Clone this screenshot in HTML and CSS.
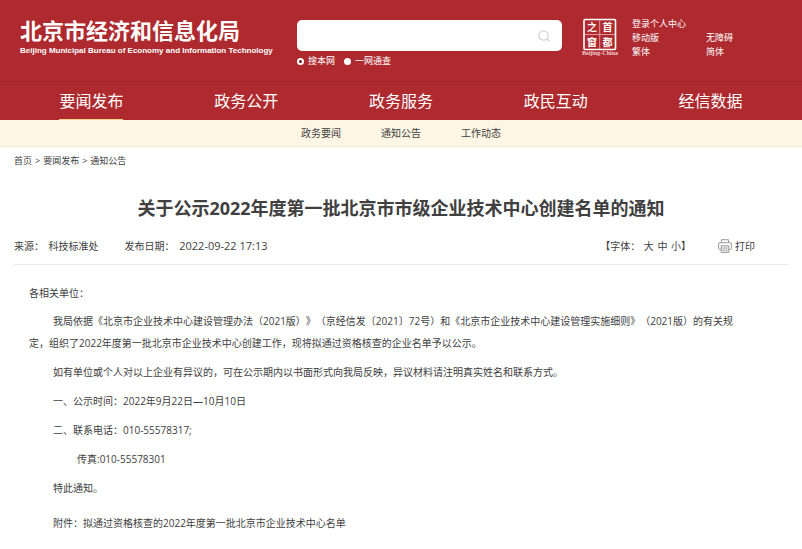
FILE: index.html
```html
<!DOCTYPE html>
<html lang="zh-CN">
<head>
  <meta charset="UTF-8">
  <meta name="viewport" content="width=device-width, initial-scale=1">
  <title>关于公示2022年度第一批北京市市级企业技术中心创建名单的通知</title>
  <link rel="stylesheet" href="styles.css">
</head>
<body>
  <header class="header">
    <div class="brand">
      <div class="brand-cn">北京市经济和信息化局</div>
      <div class="brand-en">Beijing Municipal Bureau of Economy and Information Technology</div>
    </div>

    <form class="search">
      <div class="search-box">
        <input type="text" class="search-input" aria-label="搜索">
        <button type="button" class="search-btn" aria-label="搜索">
          <svg width="12" height="12" viewBox="0 0 12 12" fill="none" stroke="#d3d3d3" stroke-width="1.3">
            <circle cx="5.5" cy="5.5" r="4.7"/>
            <path d="M8.8 8.8L11.4 11.2"/>
          </svg>
        </button>
      </div>
      <div class="search-range">
        <label><input type="radio" name="range" checked>搜本网</label>
        <label><input type="radio" name="range">一网通查</label>
      </div>
    </form>

    <a href="#" class="emblem" aria-label="首都之窗">
      <svg width="36" height="38" viewBox="0 0 36 38">
        <rect x="2" y="1.5" width="31.5" height="30" rx="1" fill="none" stroke="#fff" stroke-width="1.6"/>
        <path d="M17.7 2V31M3 16.5H33" stroke="#f0c9cb" stroke-width="0.7"/>
        <g class="emblem-seal">
          <text x="10" y="13">之</text>
          <text x="25.5" y="13">首</text>
          <text x="10" y="28">窗</text>
          <text x="25.5" y="28">都</text>
        </g>
        <text class="emblem-en" x="18" y="37">Beijing-China</text>
      </svg>
    </a>

    <div class="links">
      <a href="#" class="wide">登录个人中心</a>
      <a href="#">移动版</a>
      <a href="#">无障碍</a>
      <a href="#">繁体</a>
      <a href="#">简体</a>
    </div>
  </header>

  <nav class="nav">
    <div class="nav-item"><a href="#" class="active">要闻发布</a></div>
    <div class="nav-item"><a href="#">政务公开</a></div>
    <div class="nav-item"><a href="#">政务服务</a></div>
    <div class="nav-item"><a href="#">政民互动</a></div>
    <div class="nav-item"><a href="#">经信数据</a></div>
  </nav>

  <nav class="subnav">
    <a href="#">政务要闻</a>
    <a href="#">通知公告</a>
    <a href="#">工作动态</a>
  </nav>

  <main class="main">
    <div class="crumbs"><a href="#">首页</a> &gt; <a href="#">要闻发布</a> &gt; <a href="#">通知公告</a></div>

    <h1>关于公示2022年度第一批北京市市级企业技术中心创建名单的通知</h1>

    <div class="info">
      <div class="source">来源： <span>科技标准处</span></div>
      <div class="date">发布日期： <span class="time">2022-09-22 17:13</span></div>
      <div class="fontsize">【字体： <button type="button">大</button> <button type="button">中</button> <button type="button">小</button>】</div>
      <button type="button" class="print">
        <svg width="14" height="14" viewBox="0 0 14 14" fill="none" stroke="#999">
          <path d="M3.5 3.5V0.7H10.5V3.5"/>
          <path d="M3 10.5H1.8Q0.6 10.5 0.6 9.3V5Q0.6 3.7 1.8 3.7H12.2Q13.4 3.7 13.4 5V9.3Q13.4 10.5 12.2 10.5H11"/>
          <path d="M3.2 6.8H10.8V13.4H3.2Z" fill="#eee"/>
          <path d="M4.6 9H9.4M4.6 11.2H9.4" stroke-width="0.8"/>
        </svg>
        打印
      </button>
    </div>

    <article class="content">
      <p class="first">各相关单位：</p>
      <p>我局依据《北京市企业技术中心建设管理办法（2021版）》（京经信发〔2021〕72号）和《北京市企业技术中心建设管理实施细则》（2021版）的有关规定，组织了2022年度第一批北京市企业技术中心创建工作，现将拟通过资格核查的企业名单予以公示。</p>
      <p>如有单位或个人对以上企业有异议的，可在公示期内以书面形式向我局反映，异议材料请注明真实姓名和联系方式。</p>
      <p>一、公示时间：2022年9月22日—10月10日</p>
      <p>二、联系电话：010-55578317;</p>
      <p class="fax">传真:010-55578301</p>
      <p>特此通知。</p>
      <p class="attach">附件：<a href="#">拟通过资格核查的2022年度第一批北京市企业技术中心名单</a></p>
    </article>
  </main>
</body>
</html>
```
FILE: styles.css
```css
* {
  box-sizing: border-box;
}

body {
  margin: 0;
  font-family: "Open Sans", "Noto Sans CJK SC", sans-serif;
  font-size: 10px;
  line-height: 14px;
  color: #404040;
  background: #fff;
  text-spacing-trim: space-all;
}

a {
  color: inherit;
  text-decoration: none;
}

button {
  padding: 0;
  border: 0;
  background: none;
  font: inherit;
  color: inherit;
  cursor: pointer;
}

/* header */
.header {
  display: flex;
  align-items: flex-start;
  padding: 16px 14px 12px 20px;
  background: #ae2a2f;
  color: #fff;
}

.brand {
  width: 277px;
  white-space: nowrap;
}

.brand-cn {
  font-size: 22px;
  line-height: 28px;
  font-weight: 700;
}

.brand-en {
  font-family: "Liberation Sans", Arial, sans-serif;
  font-size: 8px;
  font-weight: 700;
}

.search {
  flex: 1;
  padding-top: 4px;
}

.search-box {
  display: flex;
  align-items: center;
  height: 31px;
  padding-right: 12px;
  border-radius: 5px;
  background: #fff;
}

.search-input {
  flex: 1;
  min-width: 0;
  height: 28px;
  margin-left: 8px;
  border: 0;
  outline: 0;
  background: none;
}

.search-btn {
  display: flex;
}

.search-range {
  display: flex;
  gap: 9px;
  padding: 3px 0 1px;
  font-size: 9px;
}

.search-range label {
  display: flex;
  align-items: center;
  gap: 4px;
}

.search-range input {
  appearance: none;
  width: 7px;
  height: 7px;
  margin: 0;
  border: 2px solid #fff;
  border-radius: 50%;
  background: #fff;
}

.search-range input:checked {
  background: #6d1518;
}

.emblem {
  display: flex;
  margin: 2px 14px 0 20px;
}

.emblem-seal {
  fill: #fff;
  font-family: "Noto Sans CJK SC", sans-serif;
  font-size: 10px;
  font-weight: 700;
  text-anchor: middle;
}

.emblem-en {
  fill: #f3d3d4;
  font-family: "Liberation Serif", serif;
  font-size: 6px;
  font-weight: 700;
  text-anchor: middle;
}

.links {
  display: grid;
  grid-template-columns: 74px 82px;
  padding-top: 1px;
  font-size: 9px;
}

.links .wide {
  grid-column: 1 / 3;
}

/* navigation */
.nav {
  display: flex;
  padding: 0 14px;
  border-top: 1px solid #992529;
  background: #ae2a2f;
  color: #fff;
  font-size: 16px;
}

.nav-item {
  flex: 1;
  text-align: center;
}

.nav-item a {
  display: inline-block;
  height: 38px;
  line-height: 38px;
  vertical-align: top;
}

.nav-item .active {
  border-bottom: 1px solid #f8d78c;
}

.subnav {
  display: flex;
  justify-content: center;
  gap: 40px;
  border-bottom: 1px solid #f4ead0;
  background: #fef6e4;
  line-height: 26px;
}

/* article */
.main {
  padding: 7px 14px;
}

.crumbs {
  display: flex;
  gap: 3px;
  font-size: 9px;
}

h1 {
  margin: 26px 0 17px;
  font-size: 18px;
  line-height: 28px;
  text-align: center;
}

.info {
  display: flex;
  align-items: center;
  padding: 0 33px 11px 0;
  border-bottom: 1px solid #e8e8e8;
}

.source span,
.date span {
  margin-left: 2px;
}

.date {
  margin-left: 26px;
}

.time {
  font-size: 11px;
}

.fontsize {
  margin-left: auto;
}

.fontsize button {
  margin-left: 1px;
}

.print {
  display: flex;
  align-items: center;
  gap: 3px;
  margin-left: 27px;
}

.content {
  padding: 17px 48px 0 15px;
  line-height: 22px;
}

.content p {
  margin: 0 0 7px;
  text-indent: 24px;
}

.content .first {
  margin-bottom: 6px;
  text-indent: 0;
}

.content .fax {
  text-indent: 48px;
}

.content .attach {
  margin-top: 13px;
}
```
